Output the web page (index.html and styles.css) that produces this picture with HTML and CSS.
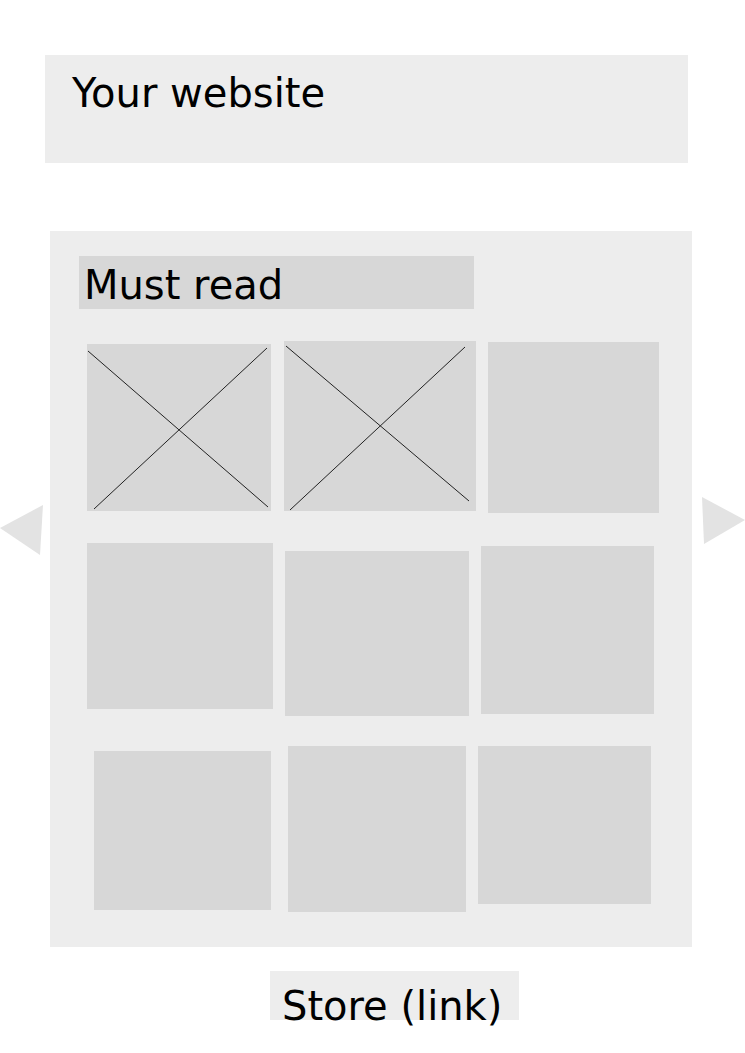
FILE: index.html
```html
<!DOCTYPE html>
<html lang="en">
<head>
    <meta charset="UTF-8">
    <meta name="viewport" content="width=device-width, initial-scale=1.0">
    <title>Your website</title>
    <link rel="stylesheet" href="styles.css">
</head>
<body>
    <header class="site-header">
        <h1>Your website</h1>
    </header>

    <div class="carousel">
        <svg class="arrow arrow-left" width="43" height="50" viewBox="0 0 43 50">
            <polygon points="0,23 43,0 40,50" />
        </svg>

        <section class="panel">
            <h2 class="panel-title">Must read</h2>

            <div class="tile-row">
                <div class="tile t1">
                    <svg class="cross" viewBox="0 0 184 167">
                        <line x1="1" y1="7" x2="181" y2="163" />
                        <line x1="7" y1="165" x2="180" y2="4" />
                    </svg>
                </div>
                <div class="tile t2">
                    <svg class="cross" viewBox="0 0 192 170">
                        <line x1="2" y1="5" x2="185" y2="160" />
                        <line x1="6" y1="169" x2="181" y2="6" />
                    </svg>
                </div>
                <div class="tile t3"></div>
            </div>

            <div class="tile-row">
                <div class="tile t4"></div>
                <div class="tile t5"></div>
                <div class="tile t6"></div>
            </div>

            <div class="tile-row">
                <div class="tile t7"></div>
                <div class="tile t8"></div>
                <div class="tile t9"></div>
            </div>
        </section>

        <svg class="arrow arrow-right" width="43" height="47" viewBox="0 0 43 47">
            <polygon points="0,0 43,23 2,47" />
        </svg>
    </div>

    <footer class="site-footer">
        <a class="store-link" href="#">Store (link)</a>
    </footer>
</body>
</html>
```

FILE: styles.css
```css
body {
    font-family: "DejaVu Sans", sans-serif;
    margin: 0;
    padding: 0;
    background-color: #fff;
    color: #000;
}

.site-header {
    margin: 55px 0 0 45px;
    width: 643px;
    height: 108px;
    background-color: #ededed;
    box-sizing: border-box;
    padding: 15px 0 0 27px;
}

.site-header h1 {
    margin: 0;
    font-size: 40px;
    font-weight: normal;
    line-height: 46px;
}

.carousel {
    display: flex;
    align-items: flex-start;
    margin-top: 68px;
}

.arrow {
    flex-shrink: 0;
    fill: #e3e3e3;
}

.arrow-left {
    margin-top: 274px;
}

.arrow-right {
    margin-top: 266px;
    margin-left: 10px;
}

.panel {
    margin-left: 7px;
    width: 642px;
    height: 716px;
    background-color: #ededed;
    box-sizing: border-box;
    padding-top: 25px;
}

.panel-title {
    margin: 0 0 32px 29px;
    width: 395px;
    height: 53px;
    box-sizing: border-box;
    padding: 6px 0 0 5px;
    background-color: #d7d7d7;
    font-size: 40px;
    font-weight: normal;
    line-height: 46px;
}

.tile-row {
    display: flex;
    align-items: flex-start;
    margin-bottom: 30px;
}

.tile {
    flex-shrink: 0;
    background-color: #d7d7d7;
}

.cross {
    display: block;
    width: 100%;
    height: 100%;
    stroke: #222;
    stroke-width: 1;
}

.t1 { margin: 3px 0 0 37px; width: 184px; height: 167px; }
.t2 { margin: 0 0 0 13px; width: 192px; height: 170px; }
.t3 { margin: 1px 0 0 12px; width: 171px; height: 171px; }

.t4 { margin: 0 0 0 37px; width: 186px; height: 166px; }
.t5 { margin: 8px 0 0 12px; width: 184px; height: 165px; }
.t6 { margin: 3px 0 0 12px; width: 173px; height: 168px; }

.t7 { margin: 5px 0 0 44px; width: 177px; height: 159px; }
.t8 { margin: 0 0 0 17px; width: 178px; height: 166px; }
.t9 { margin: 0 0 0 12px; width: 173px; height: 158px; }

.site-footer {
    padding: 24px 0 20px 270px;
}

.store-link {
    display: block;
    width: 249px;
    height: 49px;
    box-sizing: border-box;
    padding: 12px 0 0 12px;
    background-color: #ededed;
    color: #000;
    text-decoration: none;
    font-size: 40px;
    line-height: 46px;
    white-space: nowrap;
}
```
